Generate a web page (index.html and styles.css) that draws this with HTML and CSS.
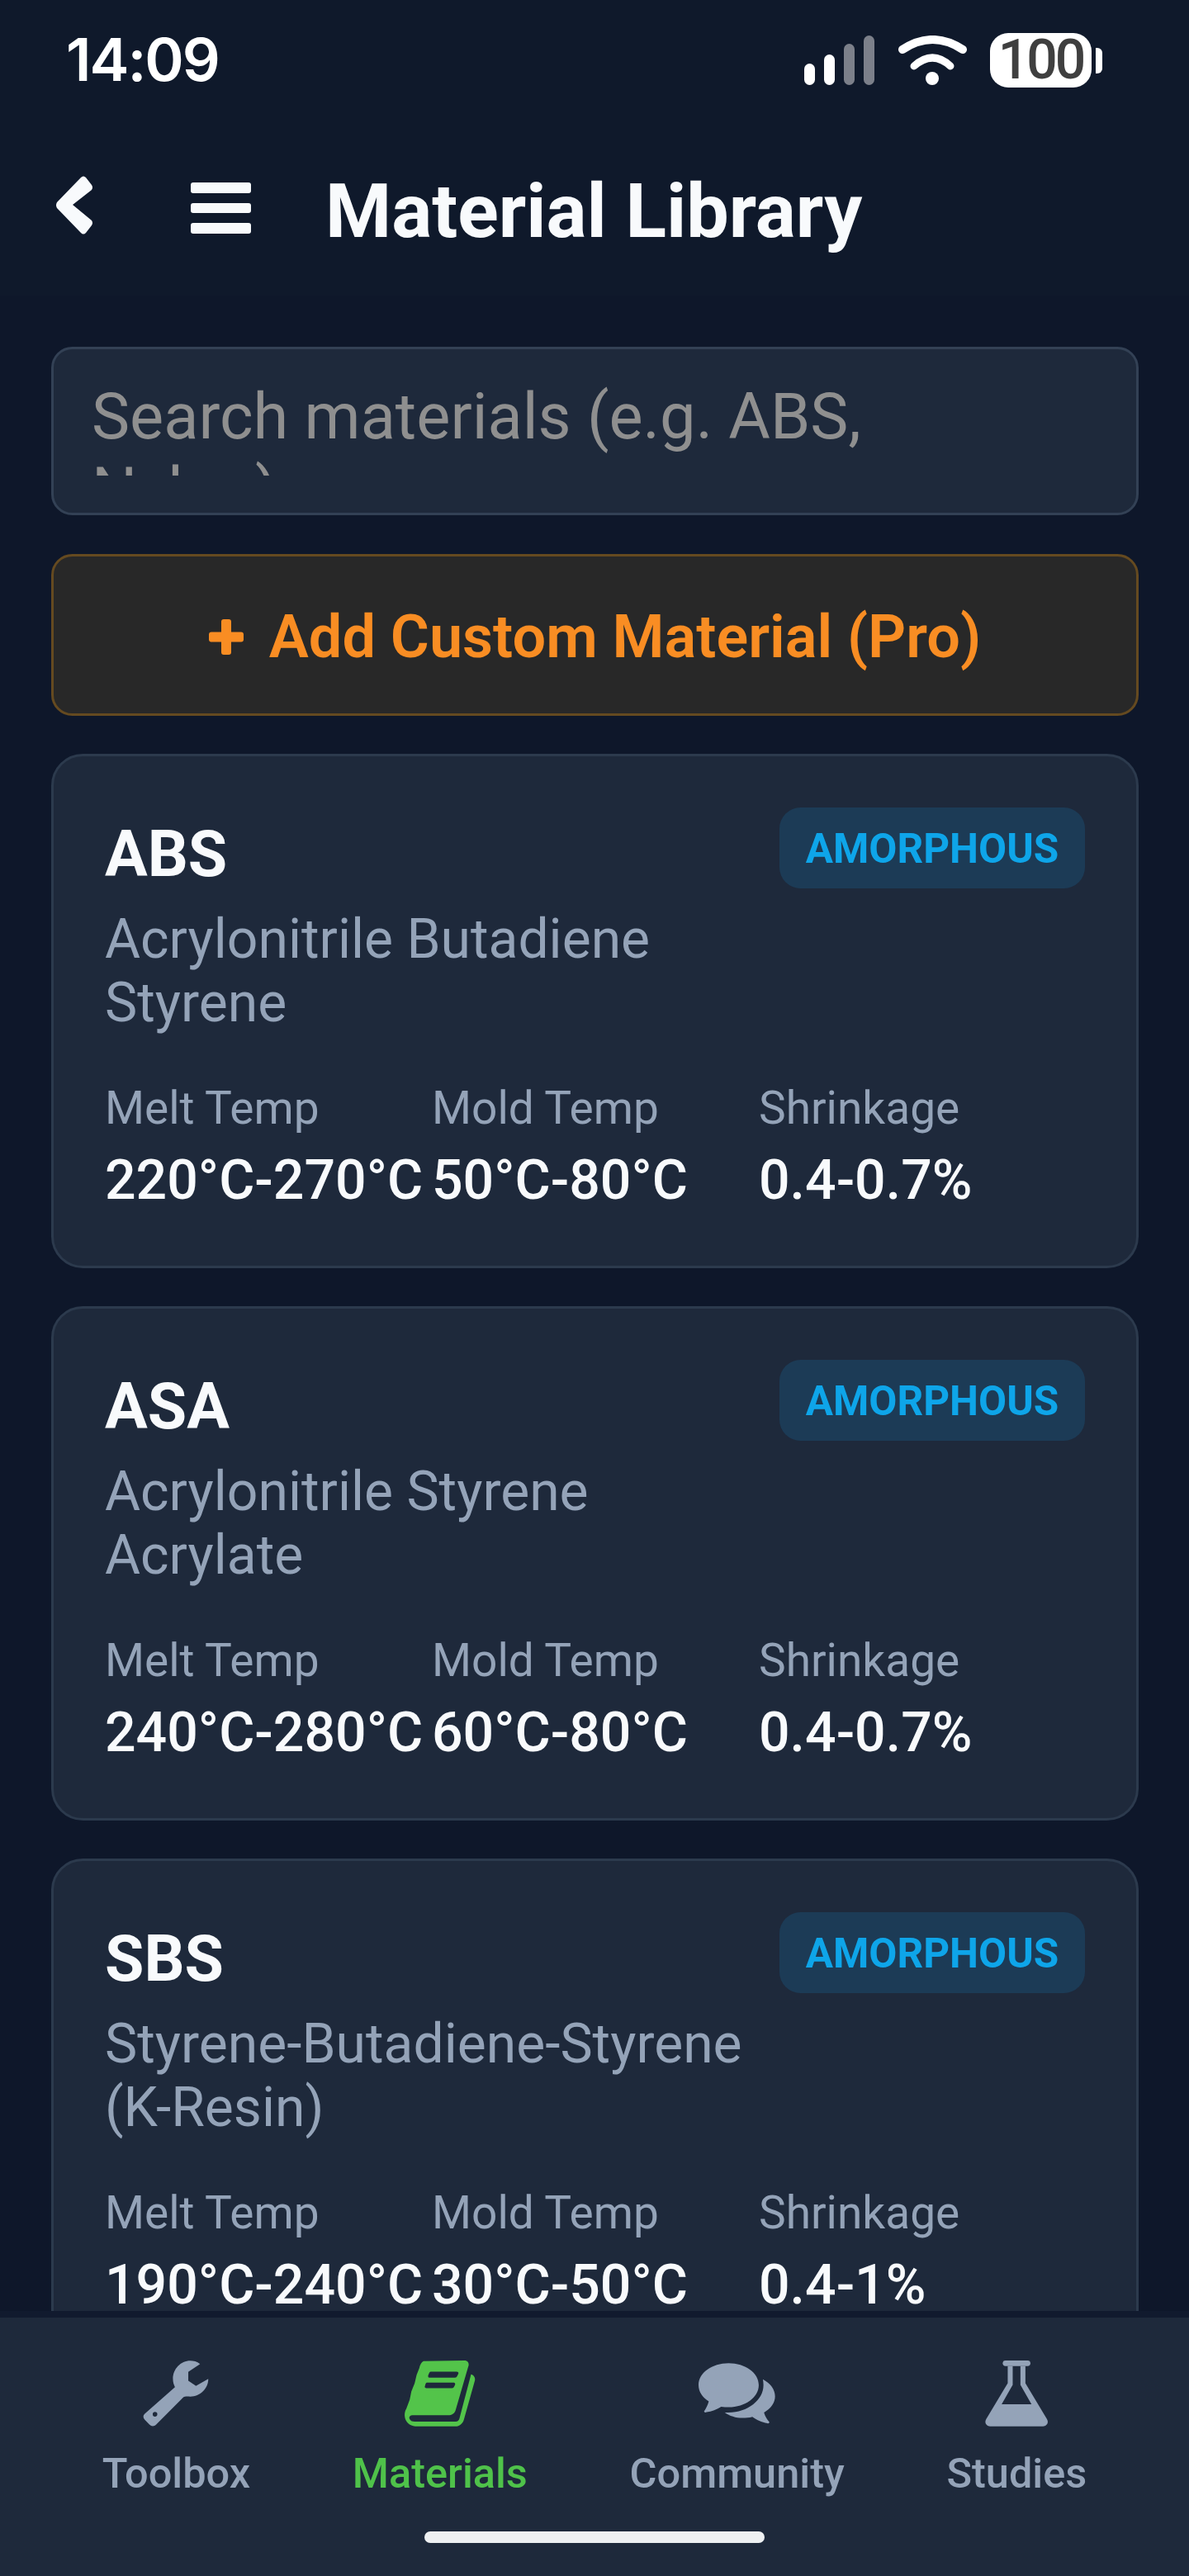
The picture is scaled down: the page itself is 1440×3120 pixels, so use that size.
FILE: index.html
```html
<!DOCTYPE html>
<html>
<head>
  <meta charset="UTF-8" />
  <title>Material Library</title>
  <link rel="stylesheet" href="styles.css">
</head>
<body>
  <div class="app">
    <header class="top">
      <div class="status-bar">
        <div class="time">14:09</div>
        <div class="status-icons">
          <svg class="signal" width="85" height="60" viewBox="0 0 85 60">
            <rect x="0" y="34" width="13" height="26" rx="6.5" fill="#fff" />
            <rect x="24" y="23" width="13" height="37" rx="6.5" fill="#fff" />
            <rect x="48" y="10" width="13" height="50" rx="6.5" fill="#7c808a" />
            <rect x="72" y="0" width="13" height="60" rx="6.5" fill="#7c808a" />
          </svg>
          <svg class="wifi" width="83" height="60" viewBox="0 0 83 60">
            <path d="M5 17 Q41.5 -7 78 17" fill="none" stroke="#fff" stroke-width="10" stroke-linecap="round" />
            <path d="M19 37 Q41.5 17 63 37" fill="none" stroke="#fff" stroke-width="9" stroke-linecap="round" />
            <circle cx="41" cy="52" r="8" fill="#fff" />
          </svg>
          <div class="battery">100</div>
        </div>
      </div>
      <div class="title-bar">
        <!-- back arrow -->
        <svg class="back-icon" width="46" height="71" viewBox="0 0 46 71">
          <path d="M31 2 Q34 -1 37 2 L44 11 Q46 14 44 17 L21 35 L44 54 Q46 57 44 60 L37 69 Q34 72 31 69 L2 39 Q0 35.500 2 32 Z" fill="#f8fafc" />
        </svg>
        <div class="menu-icon"><span></span><span></span><span></span></div>
        <h1 class="page-title">Material Library</h1>
      </div>
    </header>

    <main class="content">
      <div class="search"><div class="search-text">Search materials (e.g. ABS, Nylon)</div></div>
      <div class="add-btn">
        <svg width="42" height="43" viewBox="0 0 42 43"><path d="M15 3 Q15 0 18 0 L24 0 Q27 0 27 3 L27 15.500 L39 15.500 Q42 15.500 42 18.500 L42 24.500 Q42 27.500 39 27.500 L27 27.500 L27 40 Q27 43 24 43 L18 43 Q15 43 15 40 L15 27.500 L3 27.500 Q0 27.500 0 24.500 L0 18.500 Q0 15.500 3 15.500 L15 15.500 Z" fill="#f98d23" /></svg>
        <span>Add Custom Material (Pro)</span>
      </div>

      <div class="card">
        <div class="card-head">
          <div class="card-names">
            <div class="card-name">ABS</div>
            <div class="card-desc">Acrylonitrile Butadiene Styrene</div>
          </div>
          <div class="badge">AMORPHOUS</div>
        </div>
        <div class="props">
          <div><div class="prop-label">Melt Temp</div><div class="prop-value">220°C-270°C</div></div>
          <div><div class="prop-label">Mold Temp</div><div class="prop-value">50°C-80°C</div></div>
          <div><div class="prop-label">Shrinkage</div><div class="prop-value">0.4-0.7%</div></div>
        </div>
      </div>

      <div class="card">
        <div class="card-head">
          <div class="card-names">
            <div class="card-name">ASA</div>
            <div class="card-desc">Acrylonitrile Styrene Acrylate</div>
          </div>
          <div class="badge">AMORPHOUS</div>
        </div>
        <div class="props">
          <div><div class="prop-label">Melt Temp</div><div class="prop-value">240°C-280°C</div></div>
          <div><div class="prop-label">Mold Temp</div><div class="prop-value">60°C-80°C</div></div>
          <div><div class="prop-label">Shrinkage</div><div class="prop-value">0.4-0.7%</div></div>
        </div>
      </div>

      <div class="card">
        <div class="card-head">
          <div class="card-names">
            <div class="card-name">SBS</div>
            <div class="card-desc">Styrene-Butadiene-Styrene (K-Resin)</div>
          </div>
          <div class="badge">AMORPHOUS</div>
        </div>
        <div class="props">
          <div><div class="prop-label">Melt Temp</div><div class="prop-value">190°C-240°C</div></div>
          <div><div class="prop-label">Mold Temp</div><div class="prop-value">30°C-50°C</div></div>
          <div><div class="prop-label">Shrinkage</div><div class="prop-value">0.4-1%</div></div>
        </div>
      </div>
    </main>

    <nav class="tabbar">
      <div class="tabs">
        <div class="tab">
          <svg class="tab-icon" width="86" height="86" viewBox="85 56 257 258">
            <path fill-rule="evenodd" d="M308 70 C296 60 282 57 270 57 C232 57 202 90 202 128 C202 140 205 150 210 160 L92 264 C84 272 86 280 92 287 L110 306 C118 314 128 314 136 307 L242 200 C250 195 260 197 270 197 C308 197 341 165 340 128 L292 155 L262 135 L262 100 Z M132 257 A9 9 0 1 0 132.100 275 A9 9 0 1 0 132 257 Z" />
          </svg>
          <span>Toolbox</span>
        </div>
        <div class="tab active">
          <svg class="tab-icon" width="86" height="80" viewBox="1042 58 256 239">
            <path d="M1110 60 L1258 58 C1272 58 1276 70 1272 80 L1226 238 C1222 250 1212 256 1200 256 L1070 256 C1060 256 1056 264 1060 270 C1064 277 1070 279 1078 279 L1226 279 C1234 279 1238 275 1240 268 L1282 108 C1290 110 1298 118 1296 130 L1256 272 C1252 286 1240 296 1226 296 L1080 296 C1060 296 1044 280 1042 260 C1041 250 1043 240 1048 232 L1060 200 L1066 170 L1078 140 L1085 110 L1095 85 C1098 72 1102 64 1110 60 Z M1136 98 L1230 98 Q1238 98 1236 106 L1232 114 Q1230 120 1224 120 L1132 120 Q1125 120 1127 112 L1130 104 Q1132 98 1136 98 Z M1122 138 L1220 138 Q1226 138 1224 146 L1221 152 Q1219 158 1213 158 L1120 158 Q1113 158 1115 151 L1117 144 Q1119 138 1122 138 Z" fill-rule="evenodd" />
          </svg>
          <span>Materials</span>
        </div>
        <div class="tab">
          <svg class="tab-icon" width="93" height="73" viewBox="123 78 278 219">
            <path d="M232 78 C172 78 123 113 123 157 C123 180 137 202 160 216 C156 230 150 242 143 252 C143 256 148 257 152 255 C170 252 190 245 205 235 C214 236 223 237 232 237 C292 237 341 201 341 157 C341 113 292 78 232 78 Z" />
            <path d="M356 136 C382 150 400 172 400 198 C400 220 385 242 360 256 C364 270 372 282 379 290 C380 295 376 297 372 295 C352 292 332 282 318 272 C306 275 295 276 282 276 C258 276 235 268 218 256 C224 256 228 256 232 256 C300 256 358 212 358 157 C358 150 357 143 356 136 Z" />
          </svg>
          <span>Community</span>
        </div>
        <div class="tab">
          <svg class="tab-icon" width="76" height="80" viewBox="1172 58 227 239">
            <rect x="1236" y="58" width="100" height="20" rx="10" />
            <path d="M1254 78 L1254 140 L1176 270 C1168 284 1178 296 1190 296 L1382 296 C1394 296 1404 284 1396 270 L1318 140 L1318 78 L1300 78 L1300 146 L1340 216 L1232 216 L1272 146 L1272 78 Z" />
          </svg>
          <span>Studies</span>
        </div>
      </div>
      <div class="home-bar"></div>
    </nav>
  </div>
</body>
</html>
```

FILE: styles.css
```css
* {
  margin: 0;
  padding: 0;
  box-sizing: border-box;
}
html, body {
  width: 1440px;
  height: 3120px;
  overflow: hidden;
}
body {
  font-family: Roboto, "Noto Sans", sans-serif;
  background-color: #0e172a;
}
.app {
  height: 3120px;
  display: flex;
  flex-direction: column;
}

/* status bar + title */
.top {
  height: 358px;
  background-color: #0f192b;
  flex-shrink: 0;
}
.status-bar {
  height: 130px;
  padding: 40px 105px 0 80px;
  display: flex;
  justify-content: space-between;
  align-items: flex-start;
}
.time {
  font-family: Inter, Roboto, sans-serif;
  font-size: 72px;
  font-weight: 600;
  line-height: 64px;
  letter-spacing: -2px;
  color: #fff;
}
.status-icons {
  display: flex;
  align-items: flex-start;
  margin-left: auto;
}
.signal {
  margin: 3px 29px 0 0;
}
.wifi {
  margin: 3px 28px 0 0;
}
.battery {
  width: 123px;
  height: 66px;
  border-radius: 22px;
  background: #fff;
  color: #3f3f3f;
  font-size: 66px;
  font-weight: 500;
  letter-spacing: -3px;
  line-height: 66px;
  text-align: center;
  position: relative;
  margin-right: 13px;
}
.battery::after {
  content: "";
  position: absolute;
  right: -13px;
  top: 18px;
  width: 8px;
  height: 31px;
  background: #fff;
  border-radius: 0 6px 6px 0;
}
.title-bar {
  height: 228px;
  padding: 83px 0 0 67px;
  display: flex;
  align-items: flex-start;
}
.back-icon {
  flex-shrink: 0;
}
.menu-icon {
  width: 73px;
  margin: 8px 90px 0 118px;
  display: flex;
  flex-direction: column;
  gap: 12px;
}
.menu-icon span {
  display: block;
  height: 12.500px;
  background: #f8fafc;
  border-radius: 3px;
}
.page-title {
  font-size: 91.600px;
  font-weight: 700;
  line-height: 107px;
  color: #f8fafc;
  margin-top: -11px;
}

/* scrolling list */
.content {
  flex: 1;
  min-height: 0;
  overflow: hidden;
  padding: 62px 61px 0 62px;
  background-color: #0e172a;
}
.search {
  height: 204px;
  background-color: #1e293b;
  border: 3.200px solid #334155;
  border-radius: 25.600px;
  padding: 37px 46px 0 46px;
}
.search-text {
  height: 116px;
  width: 1020px;
  overflow: hidden;
  font-size: 77.600px;
  line-height: 90px;
  color: #8f8f8f;
}
.add-btn {
  height: 196px;
  margin-top: 47px;
  background-color: #282828;
  border: 3.200px solid #654a20;
  border-radius: 25.600px;
  display: flex;
  align-items: center;
  justify-content: center;
  gap: 31px;
  color: #f98d23;
  font-size: 72px;
  font-weight: 600;
  padding-top: 4px;
}
.card {
  margin-top: 46px;
  height: 623px;
  background-color: #1e293b;
  border: 3.200px solid #2c3a4d;
  border-radius: 38.400px;
  padding: 62px 62px 0 62px;
}
.card-head {
  display: flex;
  justify-content: space-between;
  align-items: flex-start;
}
.card-names {
  width: 800px;
}
.card-name {
  font-size: 77px;
  font-weight: 700;
  line-height: 114px;
  margin-bottom: 8px;
  color: #f8fafc;
}
.card-desc {
  font-size: 66px;
  line-height: 76.800px;
  color: #94a3b8;
}
.badge {
  width: 370px;
  height: 98px;
  background-color: #1c3b56;
  border-radius: 25.600px;
  color: #0ea5e9;
  font-size: 49.500px;
  font-weight: 700;
  line-height: 100px;
  text-align: center;
}
.props {
  margin-top: 58px;
  display: grid;
  grid-template-columns: repeat(3, 396px);
}
.prop-label {
  font-size: 55px;
  line-height: 60px;
  color: #94a3b8;
}
.prop-value {
  margin-top: 20px;
  font-size: 66.200px;
  font-weight: 500;
  line-height: 75px;
  color: #f8fafc;
  white-space: nowrap;
}

/* bottom tabs */
.tabbar {
  height: 321px;
  flex-shrink: 0;
  background-color: #1e293b;
  border-top: 8px solid #111a2e;
}
.tabs {
  display: flex;
  justify-content: space-evenly;
  padding-top: 52px;
}
.tab {
  display: flex;
  flex-direction: column;
  align-items: center;
  color: #94a3b8;
  font-size: 50.500px;
  font-weight: 500;
  line-height: 56px;
  fill: #94a3b8;
}
.tab.active {
  color: #4fc24a;
  fill: #53c44a;
}
.tab-icon {
  height: 80px;
  margin-bottom: 29px;
}
.home-bar {
  width: 412px;
  height: 14px;
  margin: 42px auto 0;
  background: #eef0f2;
  border-radius: 7px;
}
```
